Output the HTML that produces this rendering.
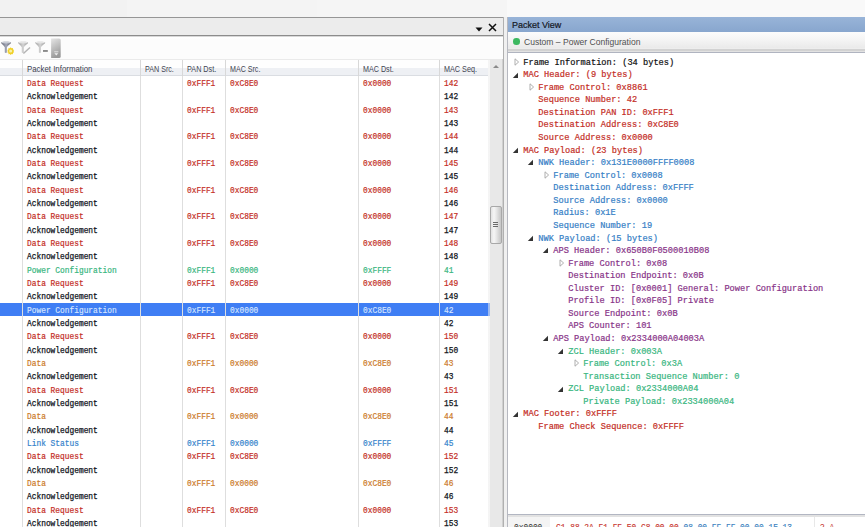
<!DOCTYPE html><html><head><meta charset="utf-8"><style>*{margin:0;padding:0;box-sizing:border-box}
html,body{width:865px;height:527px;overflow:hidden;background:#f0f0f0;font-family:"Liberation Sans",sans-serif}
#topband{position:absolute;left:0;top:0;width:507px;height:17px;background:linear-gradient(90deg,#f2f2f2 0,#f2f2f2 127px,#f4f4f4 127px,#f4f4f4 317px,#f5f5f5 317px)}
#topband2{position:absolute;left:507px;top:0;width:358px;height:17px;background:#f9f9f9}
#lp{position:absolute;left:0;top:17px;width:504px;height:510px;border-right:1px solid #b0b0b0;background:#fff}
#tabhdr{position:absolute;left:0;top:0;width:503px;height:19px;background:#ececec;border-top:1px solid #969696;border-bottom:1px solid #8c8c8c;box-shadow:0 1px 0 #d8d8d8}
#dd{position:absolute;left:475.2px;top:8.5px}
#xclose{position:absolute;left:488px;top:5px}
#toolbar{position:absolute;left:0;top:20px;width:503px;height:23px;background:linear-gradient(#fff,#fcfcfc 3px);border-bottom:1px solid #eaeaea}
#thead{position:absolute;left:0;top:43px;width:488px;height:16px;background:linear-gradient(#fefefe 0,#fefefe 8px,#eef0f4 8px,#eef0f4 15px);border-bottom:1px solid #dadde2}
.hl{position:absolute;top:5.1px;font-size:8.2px;color:#3e4452;line-height:10px;white-space:nowrap;transform-origin:0 0}
.hsep{position:absolute;top:0;width:1px;height:16px;background:#d8d8d8}
#rows{position:absolute;left:0;top:59px;width:490px;height:451px;overflow:hidden;background:#fff}
.csep{position:absolute;top:0;width:1px;height:460px;background:#dedede;z-index:2}
.r{position:absolute;left:0;width:490px;height:13.333px;font-family:"Liberation Mono",monospace;font-size:8.5px;line-height:13.333px;white-space:nowrap}
.r span{position:absolute;top:2.1px;transform:scaleX(0.9255);transform-origin:0 0}
.dr{color:#c42e26;-webkit-text-stroke:0.2px #c42e26}
.ack{color:#10131a;-webkit-text-stroke:0.25px #10131a}
.pc{color:#38b680;-webkit-text-stroke:0.2px #38b680}
.da{color:#cc7a2a;-webkit-text-stroke:0.2px #cc7a2a}
.ls{color:#3684cc;-webkit-text-stroke:0.2px #3684cc}
.sel{background:#3f7ef4;color:#d8e6ff;-webkit-text-stroke:0.15px #d8e6ff}
#sb{position:absolute;left:488px;top:42px;width:15px;height:468px;background:linear-gradient(90deg,rgba(236,236,236,0.55) 0,rgba(236,236,236,0.55) 2px,#e8e8e8 2px,#e8e8e8 13.5px,#c4c4c4 15px);z-index:3}
#sbup{position:absolute;left:5px;top:5.5px;width:0;height:0;border-left:3px solid transparent;border-right:3px solid transparent;border-bottom:3px solid #8a8a8a}
#thumb{position:absolute;left:2px;top:147px;width:11.5px;height:38px;border:1px solid #a8a8a8;border-radius:2px;background:linear-gradient(90deg,#e2e2e2 0,#f6f6f6 30%,#e6e6e6 55%,#c6c6c6 100%)}
#thumb i{display:block;position:absolute;left:1.5px;width:5.5px;height:1px;background:#6a6a6a}
#thumb i:nth-child(1){top:15px}#thumb i:nth-child(2){top:17px}#thumb i:nth-child(3){top:19px}
#rp{position:absolute;left:507px;top:17px;width:358px;height:510px;background:#e2e2e2;border-left:1px solid #b6b8c0}
#pvh{position:absolute;left:0;top:0;width:357px;height:15px;background:linear-gradient(#98b4d8,#88a6ce);font-size:9px;line-height:14px;padding-left:4px;padding-top:1px;color:#141824;-webkit-text-stroke:0.2px #141824}
#cbar{position:absolute;left:0;top:15px;width:357px;height:19px;background:linear-gradient(#fcfcfc,#f4f4f4 8px,#eaeaea 16px,#f0f0f0 17px);border-bottom:2px solid #d2d2d2}
#dot{position:absolute;left:5px;top:6px;width:6.5px;height:6.5px;border-radius:50%;background:#3cb860}
#cbar span{position:absolute;left:16px;top:2.5px;font-size:8.55px;line-height:14px;color:#505050;white-space:nowrap}
#tree{position:absolute;left:0;top:35px;width:358px;height:463px;background:#fff;border-top:1px solid #b0b4c0;border-bottom:1px solid #b2b6c2;overflow:hidden}
.t{position:absolute;height:12.56px;font-family:"Liberation Mono",monospace;font-size:8.68px;line-height:12.56px;white-space:nowrap;padding-top:3.7px}
.ex{position:absolute;left:-9px;top:5px}
.exf{position:absolute;left:-11px;top:6px}
.tk{color:#111;-webkit-text-stroke:0.2px #111}
.tr{color:#c42e26;-webkit-text-stroke:0.2px #c42e26}
.tb{color:#3680c6;-webkit-text-stroke:0.2px #3680c6}
.tp{color:#883488;-webkit-text-stroke:0.2px #883488}
.tg{color:#38b680;-webkit-text-stroke:0.2px #38b680}
#hex{position:absolute;left:0;top:500px;width:358px;height:12px;background:#fff;font-family:"Liberation Mono",monospace;font-size:8.5px;line-height:12px;white-space:nowrap}
#hoff{position:absolute;left:0;top:0;width:42px;height:12px;background:#f4f4f4;padding-left:6px;padding-top:5px;color:#333}
#hoff span{display:inline-block;transform:scaleX(0.9255);transform-origin:0 0}
#hbytes{position:absolute;left:48px;top:5px;transform:scaleX(0.9255);transform-origin:0 0;-webkit-text-stroke:0.15px currentColor}
.hr{color:#c8352e}.hb{color:#3a7fc0}
#hsep2{position:absolute;left:306px;top:0;width:1px;height:12px;background:#e8e8e8}
#hasc{position:absolute;left:312px;top:5px;color:#c42e26;transform:scaleX(0.9255);transform-origin:0 0}
</style></head><body>
<div id="topband"></div><div id="topband2"></div>
<div id="lp">
<div id="tabhdr"><svg id="dd" width="8" height="5" viewBox="0 0 8 5"><path d="M0.5 0.5H7.5L4 4.5Z" fill="#111"/></svg><svg id="xclose" width="9" height="9" viewBox="0 0 9 9"><path d="M1 1L8 8M8 1L1 8" stroke="#111" stroke-width="1.5"/></svg></div>
<div id="toolbar"><svg style="position:absolute;left:0;top:1px" width="64" height="22" viewBox="0 0 64 22"><defs><linearGradient id="fg" x1="0" x2="1" y1="0" y2="0"><stop offset="0" stop-color="#5c606c"/><stop offset="0.5" stop-color="#a4a8b8"/><stop offset="1" stop-color="#5c606c"/></linearGradient><linearGradient id="fg2" x1="0" x2="1" y1="0" y2="0"><stop offset="0" stop-color="#9c9c9c"/><stop offset="0.5" stop-color="#d4d4d4"/><stop offset="1" stop-color="#989898"/></linearGradient><linearGradient id="gr" x1="0" x2="0.3" y1="0" y2="1"><stop offset="0" stop-color="#e6e6e6"/><stop offset="0.5" stop-color="#c0c0c0"/><stop offset="1" stop-color="#9a9a9a"/></linearGradient></defs><g id="fun"><path d="M1.1 4.6C1.1 3.4 11.1 3.4 11.1 4.6C11.1 5.6 8 7.6 6.9 9.2V14.6C6.9 15.2 4.8 15.2 4.8 14.6V9.2C3.6 7.6 1.1 5.6 1.1 4.6Z" fill="url(#fg)"/><ellipse cx="6.1" cy="4.5" rx="4.6" ry="0.9" fill="#c8ccd4"/></g><path d="M10.7 9.2l0.9 1.1 1.3-0.3 0.1 1.4 1.2 0.6-0.8 1.1 0.8 1.1-1.2 0.6-0.1 1.4-1.3-0.3-0.9 1.1-0.9-1.1-1.3 0.3-0.1-1.4-1.2-0.6 0.8-1.1-0.8-1.1 1.2-0.6 0.1-1.4 1.3 0.3z" fill="#f0d028"/><circle cx="10.7" cy="12.9" r="1.5" fill="#f8f0a8"/><path d="M18.1 4.6C18.1 3.4 28.1 3.4 28.1 4.6C28.1 5.6 25 7.6 23.9 9.2V14.6C23.9 15.2 21.8 15.2 21.8 14.6V9.2C20.6 7.6 18.1 5.6 18.1 4.6Z" fill="url(#fg2)"/><ellipse cx="23.1" cy="4.5" rx="4.6" ry="0.9" fill="#e4e4e4"/><path d="M23.4 15.6l6.6-6.2" stroke="#b4b4b4" stroke-width="1.4"/><path d="M35.2 4.6C35.2 3.4 45.2 3.4 45.2 4.6C45.2 5.6 42.1 7.6 41 9.2V14.6C41 15.2 38.9 15.2 38.9 14.6V9.2C37.7 7.6 35.2 5.6 35.2 4.6Z" fill="url(#fg2)"/><ellipse cx="40.2" cy="4.5" rx="4.6" ry="0.9" fill="#e4e4e4"/><rect x="43" y="12" width="4.8" height="1.9" fill="#8a8a8a"/><path d="M51.1 0.4H59.2Q60.7 0.4 60.7 1.9V18.6Q60.7 20.1 59.2 20.1H51.1Z" fill="url(#gr)"/><path d="M54.2 13.8h4.2" stroke="#f0f0f0" stroke-width="0.8"/><path d="M54.4 15.2h3.8l-1.9 2.2z" fill="#f0f0f0"/></svg></div>
<div id="thead">
<span class="hl" style="left:27px;transform:scaleX(0.959)">Packet Information</span>
<span class="hl" style="left:145px;transform:scaleX(0.873)">PAN Src.</span>
<span class="hl" style="left:187.4px;transform:scaleX(0.885)">PAN Dst.</span>
<span class="hl" style="left:230.4px;transform:scaleX(0.867)">MAC Src.</span>
<span class="hl" style="left:363px;transform:scaleX(0.875)">MAC Dst.</span>
<span class="hl" style="left:444px;transform:scaleX(0.885)">MAC Seq.</span>
<i class="hsep" style="left:22px"></i>
<i class="hsep" style="left:140px"></i>
<i class="hsep" style="left:182px"></i>
<i class="hsep" style="left:225px"></i>
<i class="hsep" style="left:358px"></i>
<i class="hsep" style="left:439px"></i>
</div>
<div id="rows">
<i class="csep" style="left:22px"></i>
<i class="csep" style="left:140px"></i>
<i class="csep" style="left:182px"></i>
<i class="csep" style="left:225px"></i>
<i class="csep" style="left:358px"></i>
<i class="csep" style="left:439px"></i>
<div class="r dr" style="top:0.000px"><span style="left:27px">Data Request</span><span style="left:187px">0xFFF1</span><span style="left:230px">0xC8E0</span><span style="left:363px">0x0000</span><span style="left:444px">142</span></div>
<div class="r ack" style="top:13.333px"><span style="left:27px">Acknowledgement</span><span style="left:444px">142</span></div>
<div class="r dr" style="top:26.667px"><span style="left:27px">Data Request</span><span style="left:187px">0xFFF1</span><span style="left:230px">0xC8E0</span><span style="left:363px">0x0000</span><span style="left:444px">143</span></div>
<div class="r ack" style="top:40.000px"><span style="left:27px">Acknowledgement</span><span style="left:444px">143</span></div>
<div class="r dr" style="top:53.333px"><span style="left:27px">Data Request</span><span style="left:187px">0xFFF1</span><span style="left:230px">0xC8E0</span><span style="left:363px">0x0000</span><span style="left:444px">144</span></div>
<div class="r ack" style="top:66.667px"><span style="left:27px">Acknowledgement</span><span style="left:444px">144</span></div>
<div class="r dr" style="top:80.000px"><span style="left:27px">Data Request</span><span style="left:187px">0xFFF1</span><span style="left:230px">0xC8E0</span><span style="left:363px">0x0000</span><span style="left:444px">145</span></div>
<div class="r ack" style="top:93.333px"><span style="left:27px">Acknowledgement</span><span style="left:444px">145</span></div>
<div class="r dr" style="top:106.667px"><span style="left:27px">Data Request</span><span style="left:187px">0xFFF1</span><span style="left:230px">0xC8E0</span><span style="left:363px">0x0000</span><span style="left:444px">146</span></div>
<div class="r ack" style="top:120.000px"><span style="left:27px">Acknowledgement</span><span style="left:444px">146</span></div>
<div class="r dr" style="top:133.333px"><span style="left:27px">Data Request</span><span style="left:187px">0xFFF1</span><span style="left:230px">0xC8E0</span><span style="left:363px">0x0000</span><span style="left:444px">147</span></div>
<div class="r ack" style="top:146.667px"><span style="left:27px">Acknowledgement</span><span style="left:444px">147</span></div>
<div class="r dr" style="top:160.000px"><span style="left:27px">Data Request</span><span style="left:187px">0xFFF1</span><span style="left:230px">0xC8E0</span><span style="left:363px">0x0000</span><span style="left:444px">148</span></div>
<div class="r ack" style="top:173.333px"><span style="left:27px">Acknowledgement</span><span style="left:444px">148</span></div>
<div class="r pc" style="top:186.667px"><span style="left:27px">Power Configuration</span><span style="left:187px">0xFFF1</span><span style="left:230px">0x0000</span><span style="left:363px">0xFFFF</span><span style="left:444px">41</span></div>
<div class="r dr" style="top:200.000px"><span style="left:27px">Data Request</span><span style="left:187px">0xFFF1</span><span style="left:230px">0xC8E0</span><span style="left:363px">0x0000</span><span style="left:444px">149</span></div>
<div class="r ack" style="top:213.333px"><span style="left:27px">Acknowledgement</span><span style="left:444px">149</span></div>
<div class="r sel" style="top:226.667px"><span style="left:27px">Power Configuration</span><span style="left:187px">0xFFF1</span><span style="left:230px">0x0000</span><span style="left:363px">0xC8E0</span><span style="left:444px">42</span></div>
<div class="r ack" style="top:240.000px"><span style="left:27px">Acknowledgement</span><span style="left:444px">42</span></div>
<div class="r dr" style="top:253.333px"><span style="left:27px">Data Request</span><span style="left:187px">0xFFF1</span><span style="left:230px">0xC8E0</span><span style="left:363px">0x0000</span><span style="left:444px">150</span></div>
<div class="r ack" style="top:266.667px"><span style="left:27px">Acknowledgement</span><span style="left:444px">150</span></div>
<div class="r da" style="top:280.000px"><span style="left:27px">Data</span><span style="left:187px">0xFFF1</span><span style="left:230px">0x0000</span><span style="left:363px">0xC8E0</span><span style="left:444px">43</span></div>
<div class="r ack" style="top:293.333px"><span style="left:27px">Acknowledgement</span><span style="left:444px">43</span></div>
<div class="r dr" style="top:306.667px"><span style="left:27px">Data Request</span><span style="left:187px">0xFFF1</span><span style="left:230px">0xC8E0</span><span style="left:363px">0x0000</span><span style="left:444px">151</span></div>
<div class="r ack" style="top:320.000px"><span style="left:27px">Acknowledgement</span><span style="left:444px">151</span></div>
<div class="r da" style="top:333.333px"><span style="left:27px">Data</span><span style="left:187px">0xFFF1</span><span style="left:230px">0x0000</span><span style="left:363px">0xC8E0</span><span style="left:444px">44</span></div>
<div class="r ack" style="top:346.667px"><span style="left:27px">Acknowledgement</span><span style="left:444px">44</span></div>
<div class="r ls" style="top:360.000px"><span style="left:27px">Link Status</span><span style="left:187px">0xFFF1</span><span style="left:230px">0x0000</span><span style="left:363px">0xFFFF</span><span style="left:444px">45</span></div>
<div class="r dr" style="top:373.333px"><span style="left:27px">Data Request</span><span style="left:187px">0xFFF1</span><span style="left:230px">0xC8E0</span><span style="left:363px">0x0000</span><span style="left:444px">152</span></div>
<div class="r ack" style="top:386.667px"><span style="left:27px">Acknowledgement</span><span style="left:444px">152</span></div>
<div class="r da" style="top:400.000px"><span style="left:27px">Data</span><span style="left:187px">0xFFF1</span><span style="left:230px">0x0000</span><span style="left:363px">0xC8E0</span><span style="left:444px">46</span></div>
<div class="r ack" style="top:413.333px"><span style="left:27px">Acknowledgement</span><span style="left:444px">46</span></div>
<div class="r dr" style="top:426.667px"><span style="left:27px">Data Request</span><span style="left:187px">0xFFF1</span><span style="left:230px">0xC8E0</span><span style="left:363px">0x0000</span><span style="left:444px">153</span></div>
<div class="r ack" style="top:440.000px"><span style="left:27px">Acknowledgement</span><span style="left:444px">153</span></div>
</div>
<div id="sb"><div id="sbup"></div><div id="thumb"><i></i><i></i><i></i></div></div>
</div>
<div id="rp">
<div id="pvh">Packet View</div>
<div id="cbar"><i id="dot"></i><span>Custom – Power Configuration</span></div>
<div id="tree">
<div class="t tk" style="top:0.000px;left:15.3px"><svg class="ex" width="6" height="8" viewBox="0 0 6 8"><path d="M1 0.8L4.6 4L1 7.2Z" fill="#fff" stroke="#a6a6a6" stroke-width="0.9"/></svg>Frame Information: (34 bytes)</div>
<div class="t tr" style="top:12.560px;left:15.3px"><svg class="exf" width="7" height="7" viewBox="0 0 7 7"><path d="M6 0.8V6H0.8Z" fill="#333"/></svg>MAC Header: (9 bytes)</div>
<div class="t tr" style="top:25.120px;left:30.3px"><svg class="ex" width="6" height="8" viewBox="0 0 6 8"><path d="M1 0.8L4.6 4L1 7.2Z" fill="#fff" stroke="#a6a6a6" stroke-width="0.9"/></svg>Frame Control: 0x8861</div>
<div class="t tr" style="top:37.680px;left:30.3px">Sequence Number: 42</div>
<div class="t tr" style="top:50.240px;left:30.3px">Destination PAN ID: 0xFFF1</div>
<div class="t tr" style="top:62.800px;left:30.3px">Destination Address: 0xC8E0</div>
<div class="t tr" style="top:75.360px;left:30.3px">Source Address: 0x0000</div>
<div class="t tr" style="top:87.920px;left:15.3px"><svg class="exf" width="7" height="7" viewBox="0 0 7 7"><path d="M6 0.8V6H0.8Z" fill="#333"/></svg>MAC Payload: (23 bytes)</div>
<div class="t tb" style="top:100.480px;left:30.3px"><svg class="exf" width="7" height="7" viewBox="0 0 7 7"><path d="M6 0.8V6H0.8Z" fill="#333"/></svg>NWK Header: 0x131E0000FFFF0008</div>
<div class="t tb" style="top:113.040px;left:45.3px"><svg class="ex" width="6" height="8" viewBox="0 0 6 8"><path d="M1 0.8L4.6 4L1 7.2Z" fill="#fff" stroke="#a6a6a6" stroke-width="0.9"/></svg>Frame Control: 0x0008</div>
<div class="t tb" style="top:125.600px;left:45.3px">Destination Address: 0xFFFF</div>
<div class="t tb" style="top:138.160px;left:45.3px">Source Address: 0x0000</div>
<div class="t tb" style="top:150.720px;left:45.3px">Radius: 0x1E</div>
<div class="t tb" style="top:163.280px;left:45.3px">Sequence Number: 19</div>
<div class="t tb" style="top:175.840px;left:30.3px"><svg class="exf" width="7" height="7" viewBox="0 0 7 7"><path d="M6 0.8V6H0.8Z" fill="#333"/></svg>NWK Payload: (15 bytes)</div>
<div class="t tp" style="top:188.400px;left:45.3px"><svg class="exf" width="7" height="7" viewBox="0 0 7 7"><path d="M6 0.8V6H0.8Z" fill="#333"/></svg>APS Header: 0x650B0F0500010B08</div>
<div class="t tp" style="top:200.960px;left:60.3px"><svg class="ex" width="6" height="8" viewBox="0 0 6 8"><path d="M1 0.8L4.6 4L1 7.2Z" fill="#fff" stroke="#a6a6a6" stroke-width="0.9"/></svg>Frame Control: 0x08</div>
<div class="t tp" style="top:213.520px;left:60.3px">Destination Endpoint: 0x0B</div>
<div class="t tp" style="top:226.080px;left:60.3px">Cluster ID: [0x0001] General: Power Configuration</div>
<div class="t tp" style="top:238.640px;left:60.3px">Profile ID: [0x0F05] Private</div>
<div class="t tp" style="top:251.200px;left:60.3px">Source Endpoint: 0x0B</div>
<div class="t tp" style="top:263.760px;left:60.3px">APS Counter: 101</div>
<div class="t tp" style="top:276.320px;left:45.3px"><svg class="exf" width="7" height="7" viewBox="0 0 7 7"><path d="M6 0.8V6H0.8Z" fill="#333"/></svg>APS Payload: 0x2334000A04003A</div>
<div class="t tg" style="top:288.880px;left:60.3px"><svg class="exf" width="7" height="7" viewBox="0 0 7 7"><path d="M6 0.8V6H0.8Z" fill="#333"/></svg>ZCL Header: 0x003A</div>
<div class="t tg" style="top:301.440px;left:75.3px"><svg class="ex" width="6" height="8" viewBox="0 0 6 8"><path d="M1 0.8L4.6 4L1 7.2Z" fill="#fff" stroke="#a6a6a6" stroke-width="0.9"/></svg>Frame Control: 0x3A</div>
<div class="t tg" style="top:314.000px;left:75.3px">Transaction Sequence Number: 0</div>
<div class="t tg" style="top:326.560px;left:60.3px"><svg class="exf" width="7" height="7" viewBox="0 0 7 7"><path d="M6 0.8V6H0.8Z" fill="#333"/></svg>ZCL Payload: 0x2334000A04</div>
<div class="t tg" style="top:339.120px;left:75.3px">Private Payload: 0x2334000A04</div>
<div class="t tr" style="top:351.680px;left:15.3px"><svg class="exf" width="7" height="7" viewBox="0 0 7 7"><path d="M6 0.8V6H0.8Z" fill="#333"/></svg>MAC Footer: 0xFFFF</div>
<div class="t tr" style="top:364.240px;left:30.3px">Frame Check Sequence: 0xFFFF</div>
</div>
<div id="hex"><div id="hoff"><span>0x0000</span></div><div id="hbytes"><span class="hr">C1 88 2A F1 FF E0 C8 00 00</span> <span class="hb">08 00 FF FF 00 00 1E 13</span></div><i id="hsep2"></i><div id="hasc">?.A</div></div>
</div>
</body></html>
